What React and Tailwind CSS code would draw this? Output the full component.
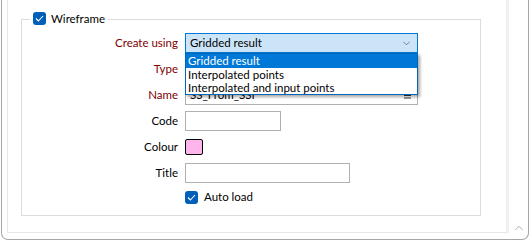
import { ChevronDown, ChevronUp } from 'lucide-react'

const font = { fontFamily: 'Lato, "Noto Sans", sans-serif' }

function Check() {
  return (
    <span className="flex h-[13px] w-[13px] items-center justify-center rounded-[3px] bg-[#005fb8]">
      <svg width="9" height="7" viewBox="0 0 9 7" fill="none">
        <path d="M1 3.5L3.4 6L8 1" stroke="white" strokeWidth="1.1" />
      </svg>
    </span>
  )
}

function Row({ label, red, children, className = 'h-[26px]' }) {
  return (
    <div className={`flex items-center ${className}`}>
      <div className={`w-[157px] pr-[1px] text-right text-[11.5px] leading-none ${red ? 'text-[#800000]' : 'text-black'}`}>
        {label}
      </div>
      <div className="relative ml-[6px] flex items-center">{children}</div>
    </div>
  )
}

function Dropdown() {
  const items = ['Gridded result', 'Interpolated points', 'Interpolated and input points']
  return (
    <div className="absolute left-0 top-[20px] z-10 w-[233px] border border-[#0066b8] bg-white shadow-[2px_2px_3px_rgba(0,0,0,0.35)]">
      {items.map((item, i) => (
        <div
          key={item}
          className={`flex h-[13px] items-center pl-[2px] text-[11.5px] leading-none ${i === 0 ? 'h-[14px] bg-[#0078d7] text-white' : 'text-black'}`}
        >
          {item}
        </div>
      ))}
    </div>
  )
}

export default function App() {
  return (
    <div className="h-[241px] w-[530px] bg-white" style={font}>
      <div className="ml-px flex h-[240px] w-[528px] rounded-b-[7px] border-x border-b border-[#a6a6a6]">
        <div className="ml-[5px] h-[233px] w-[502px] border-b border-l border-r-[3px] border-[#e6e6e6] border-r-[#f0f0f0]">
          <div className="relative ml-[13px] mt-[19px] h-[197px] w-[460px] border border-[#dcdcdc]">
            <div className="absolute left-[8px] top-[-8px] flex items-center gap-[5px] bg-white px-[3px]">
              <Check />
              <span className="text-[11.5px] leading-none text-black">Wireframe</span>
            </div>

            <div className="pt-[10px]">
              <Row label="Create using" red>
                <div className="flex h-[20px] w-[233px] items-center justify-between border border-[#0078d7] bg-[#cce4f7] pl-[4px] pr-[5px] text-[11.5px] leading-none">
                  <span>Gridded result</span>
                  <ChevronDown size={11} strokeWidth={1.5} className="text-[#555]" />
                </div>
                <Dropdown />
              </Row>
              <Row label="Type" red />
              <Row label="Name" red>
                <div className="flex h-[20px] w-[233px] items-center justify-between border border-[#b0b0b0] bg-white pl-[4px] pr-[6px] text-[11.5px] leading-none">
                  <span>SS_From_SSF</span>
                  <svg width="7" height="7" viewBox="0 0 7 7">
                    <path d="M0 1H7M0 3.5H7M0 6H7" stroke="#333" strokeWidth="1" />
                  </svg>
                </div>
              </Row>
              <Row label="Code">
                <div className="h-[20px] w-[96px] border border-[#b0b0b0] bg-white" />
              </Row>
              <Row label="Colour">
                <div className="h-[16px] w-[18px] rounded-[2px] border border-black bg-[#ffb4ec]" />
              </Row>
              <Row label="Title">
                <div className="h-[20px] w-[165px] border border-[#b0b0b0] bg-white" />
              </Row>
              <Row label="" className="h-[22px]">
                <div className="flex items-center gap-[6px]">
                  <Check />
                  <span className="text-[11.5px] leading-none text-black">Auto load</span>
                </div>
              </Row>
            </div>
          </div>
        </div>
        <div className="flex flex-1 items-end justify-center pb-[4px]">
          <ChevronUp size={14} strokeWidth={1} className="text-[#777]" />
        </div>
      </div>
    </div>
  )
}
